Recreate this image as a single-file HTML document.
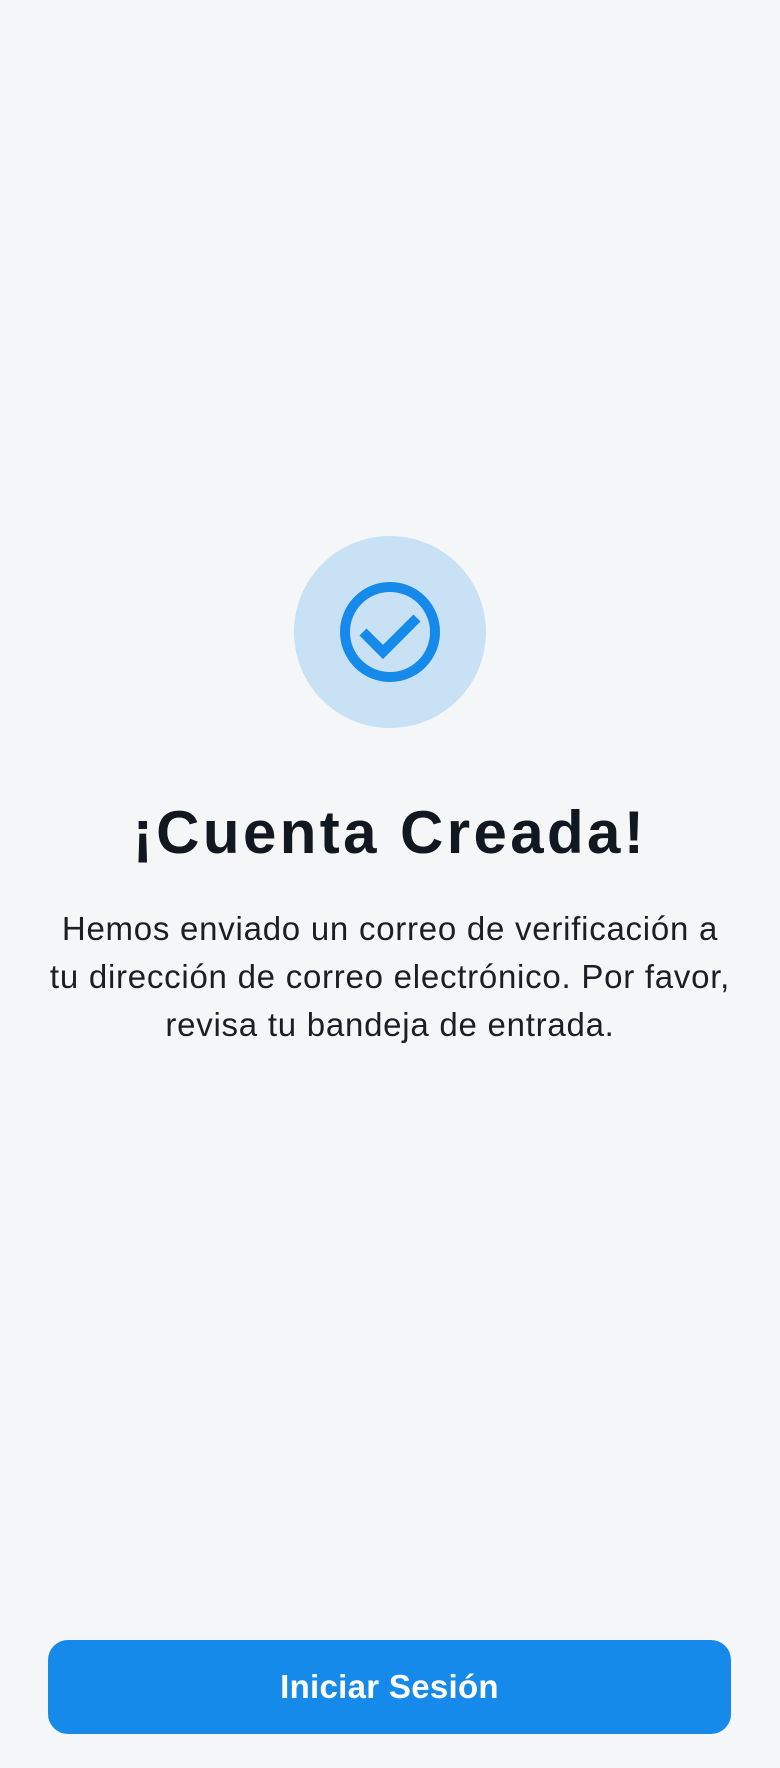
<!DOCTYPE html>
<html><head><meta charset="utf-8"><style>
html,body{margin:0;padding:0}
body{width:780px;height:1768px;background:#f5f6f8;position:relative;font-family:"Liberation Sans",sans-serif;overflow:hidden}
.icon{position:absolute;left:294px;top:536px;width:192px;height:192px}
h1{position:absolute;left:0;width:780px;top:795px;margin:0;text-align:center;font-size:60px;font-weight:700;color:#111820;line-height:76px;letter-spacing:3.4px}
p{position:absolute;left:0;width:780px;top:905px;margin:0;text-align:center;font-size:33px;line-height:48px;color:#1a1f26;letter-spacing:0.75px;white-space:nowrap}
.btn{position:absolute;left:48px;top:1640px;width:683px;height:94px;border-radius:20px;background:#168aeb;color:#fff;font-weight:700;font-size:33px;letter-spacing:0.3px;display:flex;align-items:center;justify-content:center}
</style></head><body>
<svg class="icon" viewBox="0 0 192 192">
<circle cx="96" cy="96" r="96" fill="#c9e1f5"/>
<circle cx="96" cy="96" r="45" fill="none" stroke="#168aeb" stroke-width="10"/>
<path d="M69 96 L89 116 L123 82" fill="none" stroke="#168aeb" stroke-width="10"/>
</svg>
<h1>¡Cuenta Creada!</h1>
<p>Hemos enviado un correo de verificación a<br>tu dirección de correo electrónico. Por favor,<br>revisa tu bandeja de entrada.</p>
<div class="btn">Iniciar Sesión</div>
</body></html>
